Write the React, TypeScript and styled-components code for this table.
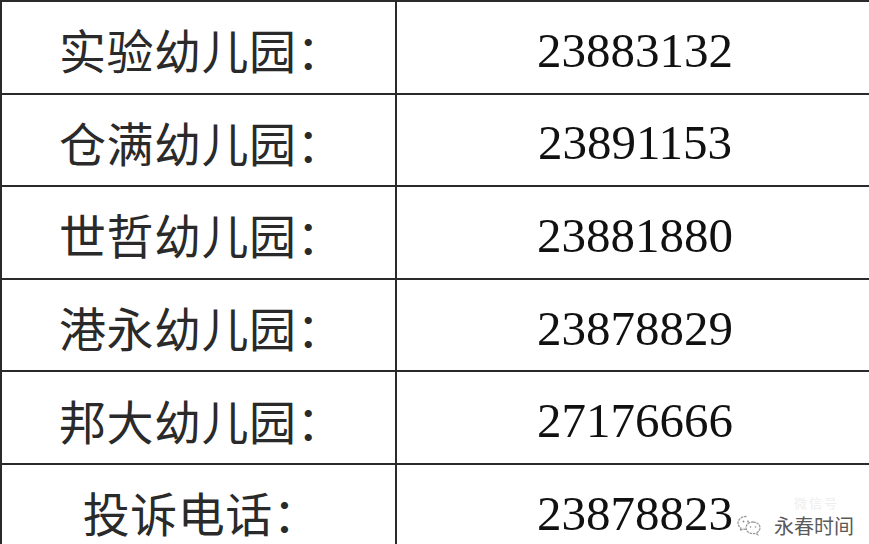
import React from "react";
import styled, { createGlobalStyle } from "styled-components";

const GlobalStyle = createGlobalStyle`
  html, body {
    margin: 0;
    padding: 0;
    background: #ffffff;
    overflow: hidden;
  }
  body {
    width: 869px;
    height: 544px;
  }
`;

const Page = styled.div`
  position: relative;
  width: 869px;
  height: 544px;
  overflow: hidden;
  background: #ffffff;
`;

const Table = styled.div`
  display: flex;
  flex-direction: column;
  width: 100%;
  border-top: 2px solid #2a2a2a;
  border-left: 2px solid #2a2a2a;
  box-sizing: border-box;
`;

const Row = styled.div`
  display: grid;
  grid-template-columns: 395px 1fr;
  height: 92.6px;
  box-sizing: border-box;
  border-bottom: 2px solid #2a2a2a;
  flex-shrink: 0;
`;

const LabelCell = styled.div`
  display: flex;
  align-items: center;
  justify-content: center;
  border-right: 2px solid #2a2a2a;
  padding-top: 3px;
  padding-left: 6px;
  box-sizing: border-box;
  font-family: "Noto Sans CJK SC", "Noto Sans CJK JP", sans-serif;
  font-size: 47px;
  font-weight: 400;
  letter-spacing: 0.5px;
  color: #2a2a2a;
`;

const NumberCell = styled.div`
  display: flex;
  align-items: center;
  justify-content: center;
  padding-top: 6px;
  padding-left: 4px;
  box-sizing: border-box;
  font-family: "Liberation Serif", "Times New Roman", serif;
  font-size: 49px;
  color: #111111;
`;

const Watermark = styled.div`
  position: absolute;
  right: 15px;
  bottom: 5px;
  display: flex;
  align-items: center;
  gap: 12px;
`;

const WatermarkText = styled.span`
  font-family: "Noto Sans CJK SC", sans-serif;
  font-size: 20px;
  line-height: 22px;
  color: #5a5a5a;
  text-shadow: 0 0 2px #ffffff, 0 0 3px #ffffff;
`;

const Ghost = styled.span`
  position: absolute;
  right: 30px;
  bottom: 34px;
  font-family: "Noto Sans CJK SC", sans-serif;
  font-size: 13px;
  line-height: 14px;
  color: #eeeeee;
  letter-spacing: 2px;
`;

const rows: { name: string; phone: string }[] = [
  { name: "实验幼儿园：", phone: "23883132" },
  { name: "仓满幼儿园：", phone: "23891153" },
  { name: "世哲幼儿园：", phone: "23881880" },
  { name: "港永幼儿园：", phone: "23878829" },
  { name: "邦大幼儿园：", phone: "27176666" },
  { name: "投诉电话：", phone: "23878823" },
];

const WeChatIcon = () => (
  <svg width="26" height="26" viewBox="0 0 26 26" fill="none">
    <path
      d="M10 3.5c-4.4 0-8 2.9-8 6.5 0 2 1.1 3.8 2.9 5l-.7 2.4 2.8-1.5c.9.3 2 .5 3 .5"
      stroke="#9a9a9a"
      strokeWidth="1.3"
      strokeDasharray="1.6 1.8"
      strokeLinecap="round"
    />
    <path
      d="M17 9c-4 0-7 2.6-7 5.8s3 5.8 7 5.8c.8 0 1.6-.1 2.3-.3l2.4 1.3-.6-2.1c1.7-1.1 2.9-2.8 2.9-4.7C24 11.6 21 9 17 9z"
      stroke="#9a9a9a"
      strokeWidth="1.3"
      strokeDasharray="1.6 1.8"
      strokeLinecap="round"
    />
    <circle cx="7.5" cy="8.5" r="0.9" fill="#8a8a8a" />
    <circle cx="12" cy="8.5" r="0.9" fill="#8a8a8a" />
    <circle cx="14.5" cy="14" r="0.8" fill="#8a8a8a" />
    <circle cx="19.5" cy="14" r="0.8" fill="#8a8a8a" />
  </svg>
);

export default function App() {
  return (
    <Page>
      <GlobalStyle />
      <Table>
        {rows.map((r) => (
          <Row key={r.name}>
            <LabelCell>{r.name}</LabelCell>
            <NumberCell>{r.phone}</NumberCell>
          </Row>
        ))}
      </Table>
      <Ghost>微信号</Ghost>
      <Watermark>
        <WeChatIcon />
        <WatermarkText>永春时间</WatermarkText>
      </Watermark>
    </Page>
  );
}
